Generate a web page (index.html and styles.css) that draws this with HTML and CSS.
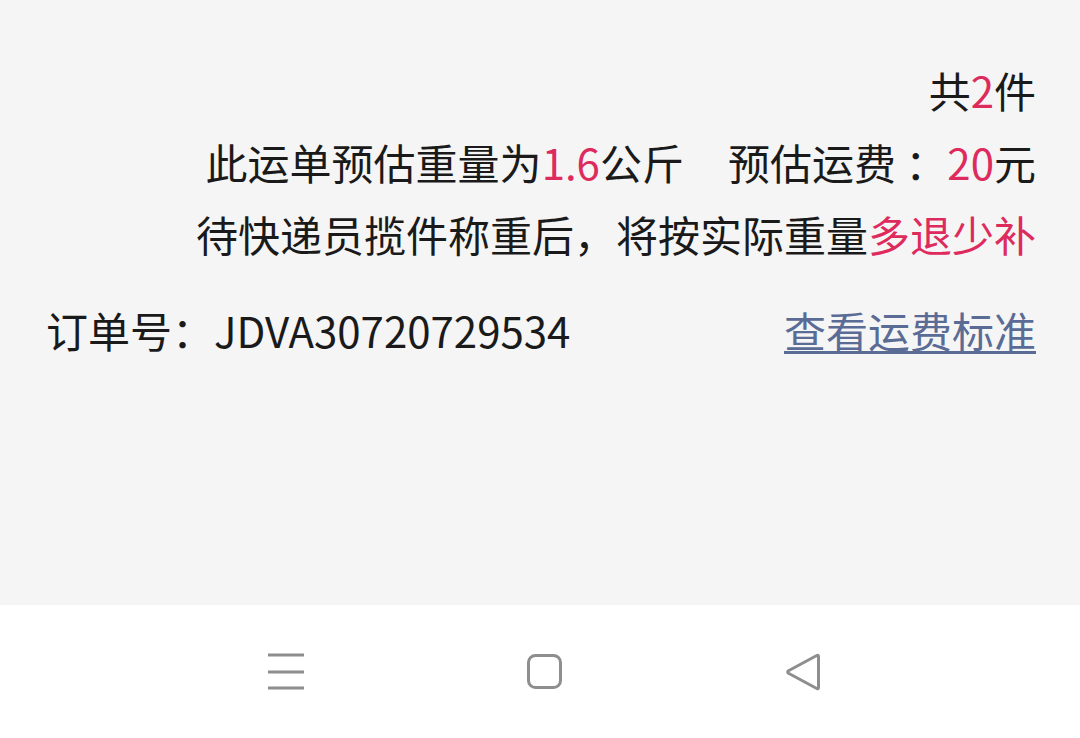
FILE: index.html
```html
<!DOCTYPE html>
<html lang="zh-CN">
<head>
    <meta charset="UTF-8">
    <meta name="viewport" content="width=device-width, initial-scale=1.0">
    <title>运单详情</title>
    <link rel="stylesheet" href="styles.css">
</head>
<body>
    <div class="page">
        <div class="content">
            <div class="summary">
                <p class="line">共<em>2</em>件</p>
                <p class="line">此运单预估重量为<em>1.6</em>公斤<span class="fee">预估运费 ：<em>20</em>元</span></p>
                <p class="line">待快递员揽件称重后，将按实际重量<em>多退少补</em></p>
            </div>
            <div class="order">
                <span class="order-no">订单号：JDVA30720729534</span>
                <a class="rule-link" href="#">查看运费标准</a>
            </div>
        </div>
        <div class="navbar">
            <span class="nav-btn">
                <svg width="40" height="40" viewBox="0 0 40 40">
                    <path d="M2 3H38M2 20H38M2 36H38" stroke="#8e8e8e" stroke-width="3" fill="none"/>
                </svg>
            </span>
            <span class="nav-btn">
                <svg width="40" height="40" viewBox="0 0 40 40">
                    <rect x="4.5" y="3.5" width="32" height="32" rx="7" stroke="#8e8e8e" stroke-width="3" fill="none"/>
                </svg>
            </span>
            <span class="nav-btn">
                <svg width="40" height="40" viewBox="0 0 40 40">
                    <path d="M36.5 4.5V35.5Q36.5 37.5 34.8 36.5L6.5 21.3Q4.8 20 6.5 18.7L34.8 3.5Q36.5 2.5 36.5 4.5Z" stroke="#8e8e8e" stroke-width="3" stroke-linejoin="round" fill="none"/>
                </svg>
            </span>
        </div>
    </div>
</body>
</html>
```

FILE: styles.css
```css
body {
    margin: 0;
    background-color: #f5f5f5;
    font-family: "Noto Sans CJK SC", sans-serif;
    color: #1a1a1a;
}
.page {
    display: flex;
    flex-direction: column;
    height: 738px;
}
.content {
    flex: 1;
    padding: 54px 44px 0 46px;
}
.summary {
    text-align: right;
}
.line {
    margin: 0;
    font-size: 42px;
    line-height: 72px;
}
em {
    font-style: normal;
    color: #de2b5d;
}
.fee {
    margin-left: 44px;
}
.order {
    display: flex;
    justify-content: space-between;
    margin-top: 24px;
    font-size: 42px;
    line-height: 72px;
}
.rule-link {
    color: #5a6c96;
    text-decoration: underline;
    text-decoration-thickness: 3px;
    text-underline-offset: 3px;
}
.navbar {
    height: 133px;
    background-color: #fff;
    display: flex;
    align-items: center;
    gap: 218px;
    padding-left: 266px;
}
.nav-btn {
    display: flex;
    width: 40px;
    height: 40px;
}
```
